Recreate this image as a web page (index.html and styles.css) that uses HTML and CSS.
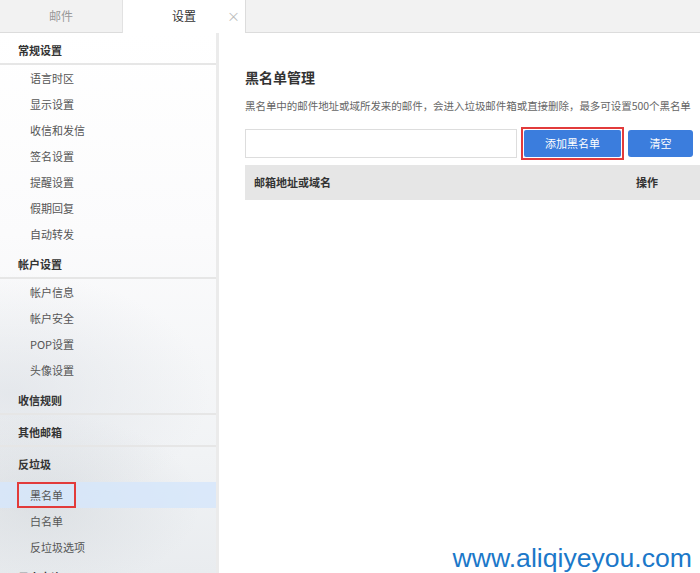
FILE: index.html
```html
<!DOCTYPE html>
<html lang="zh-CN">
<head>
    <meta charset="UTF-8">
    <title>设置 - 黑名单</title>
    <link rel="stylesheet" href="styles.css">
</head>
<body>

    <div class="tabs">
        <div class="tab">邮件</div>
        <div class="tab active">设置<span class="close">×</span></div>
    </div>

    <div class="layout">
        <div class="sidebar">
            <div class="group first">常规设置</div>
            <div class="item">语言时区</div>
            <div class="item">显示设置</div>
            <div class="item">收信和发信</div>
            <div class="item">签名设置</div>
            <div class="item">提醒设置</div>
            <div class="item">假期回复</div>
            <div class="item">自动转发</div>

            <div class="group">帐户设置</div>
            <div class="item">帐户信息</div>
            <div class="item">帐户安全</div>
            <div class="item">POP设置</div>
            <div class="item">头像设置</div>

            <div class="group">收信规则</div>
            <div class="group">其他邮箱</div>

            <div class="group open">反垃圾</div>
            <div class="item current"><span class="mark">黑名单</span></div>
            <div class="item">白名单</div>
            <div class="item">反垃圾选项</div>

            <div class="group">日志查询</div>
        </div>

        <div class="main">
            <h2>黑名单管理</h2>
            <p class="desc">黑名单中的邮件地址或域所发来的邮件，会进入垃圾邮件箱或直接删除，最多可设置500个黑名单</p>

            <div class="form-row">
                <input type="text" class="input">
                <span class="mark-btn"><button class="btn">添加黑名单</button></span>
                <button class="btn small">清空</button>
            </div>

            <div class="table-head">
                <span>邮箱地址或域名</span>
                <span class="op">操作</span>
            </div>
        </div>
    </div>

    <div class="watermark">www.aliqiyeyou.com</div>

</body>
</html>
```

FILE: styles.css
```css
body {
    margin: 0;
    width: 700px;
    height: 573px;
    overflow: hidden;
    font-family: "Noto Sans CJK SC", "Noto Sans", sans-serif;
    color: #333;
    background-color: #fff;
    position: relative;
}

.tabs {
    display: flex;
    height: 32px;
    background-color: #f2f2f2;
    border-bottom: 1px solid #dcdcdc;
}

.tab {
    width: 122px;
    line-height: 32px;
    text-align: center;
    font-size: 12px;
    color: #999;
    position: relative;
}

.tab.active {
    background-color: #fff;
    color: #333;
    border-left: 1px solid #e2e2e2;
    border-right: 1px solid #dcdcdc;
    height: 33px;
}

.tab .close {
    position: absolute;
    right: 5px;
    top: 0;
    color: #bbb;
    font-size: 13px;
}

.layout {
    display: flex;
    height: 540px;
}

.sidebar {
    width: 216px;
    flex-shrink: 0;
    border-right: 3px solid #ebebeb;
    background:
        radial-gradient(ellipse 160px 90px at 40px 470px, rgba(200, 205, 210, 0.45), transparent),
        radial-gradient(ellipse 200px 120px at 10px 360px, rgba(210, 215, 222, 0.45), transparent),
        linear-gradient(to bottom, #ffffff 0px, #fbfbfc 200px, #f1f3f5 420px, #e9ecef 540px);
    font-size: 11px;
}

.group {
    height: 28px;
    padding-top: 2px;
    line-height: 30px;
    padding-left: 18px;
    font-weight: bold;
    color: #333;
    border-bottom: 2px solid #e6e6e6;
}

.group.open {
    height: 33px;
    border-bottom: 0;
}

.item {
    height: 26px;
    line-height: 26px;
    padding-left: 30px;
    color: #555;
}

.item.current {
    background-color: rgba(214, 230, 250, 0.85);
    padding-left: 17px;
}

.mark {
    display: inline-block;
    height: 22px;
    line-height: 22px;
    padding: 0 11px 0 11px;
    border: 2px solid #e23b3b;
    vertical-align: top;
}

.main {
    flex: 1;
    padding-left: 26px;
}

.main h2 {
    margin: 34px 0 0;
    font-size: 14px;
    line-height: 20px;
    font-weight: bold;
    color: #333;
}

.desc {
    margin: 11px 0 0;
    font-size: 10.5px;
    line-height: 16px;
    color: #666;
    white-space: nowrap;
    letter-spacing: -0.05px;
}

.form-row {
    display: flex;
    align-items: center;
    margin-top: 12px;
    height: 34px;
}

.input {
    width: 270px;
    height: 27px;
    border: 1px solid #ddd;
    padding: 0;
    margin: 0;
}

.mark-btn {
    display: flex;
    margin-left: 4px;
    border: 2px solid #e23b3b;
    padding: 1px;
}

.btn {
    height: 27px;
    width: 97px;
    border: 0;
    border-radius: 2px;
    background-color: #3b7ddd;
    color: #fff;
    font-family: inherit;
    font-size: 11px;
    padding: 0;
}

.btn.small {
    width: 65px;
    height: 27px;
    margin-left: 4px;
    border-radius: 3px;
}

.table-head {
    display: flex;
    margin-top: 5px;
    height: 35px;
    line-height: 35px;
    background-color: #e6e6e6;
    font-size: 11px;
    font-weight: bold;
    color: #333;
    padding-left: 9px;
}

.table-head .op {
    margin-left: 305px;
}

.watermark {
    position: absolute;
    right: 8px;
    bottom: 0;
    font-family: "Liberation Sans", Arial, sans-serif;
    font-size: 26.6px;
    line-height: 30px;
    color: #1b78c9;
}
```
